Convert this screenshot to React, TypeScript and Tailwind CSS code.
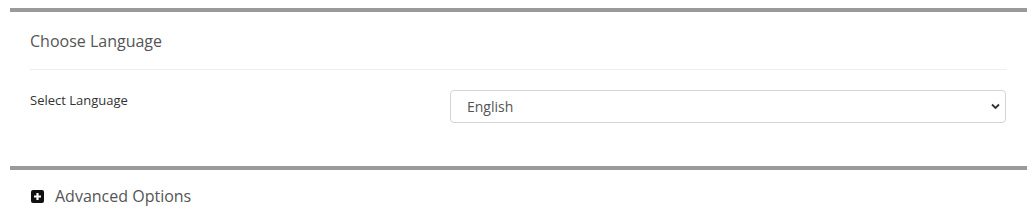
import { useState } from 'react'

export default function App() {
    const [language, setLanguage] = useState('en')
    const [advancedOpen, setAdvancedOpen] = useState(false)

    return (
        <div className="w-[1036px] h-[210px] bg-white pt-[8px] pl-[10px] pr-[9px] font-['Open_Sans',sans-serif] overflow-hidden">
            {/* language box */}
            <section className="border-t-4 border-[#9a9a9a] px-[20px]">
                <h3 className="pt-[18px] pb-[17px] text-[16px] leading-[22px] text-[#555] font-normal">Choose Language</h3>
                <div className="border-t border-[#eee] pt-[20px] pb-[43px] flex">
                    <label className="w-[420px] pt-[1px] text-[13px] leading-[18px] font-normal text-[#333]">Select Language</label>
                    <div className="relative flex-1 mr-[1px]">
                        <select
                            value={language}
                            onChange={(e) => setLanguage(e.target.value)}
                            className="appearance-none w-full h-[33px] pl-[16px] pr-[30px] border border-[#d4d4d4] rounded-[4px] bg-white text-[14px] text-[#555] outline-none"
                        >
                            <option value="en">English</option>
                            <option value="de">Deutsch</option>
                            <option value="fr">Français</option>
                        </select>
                        <svg className="absolute right-[6px] top-[13px] pointer-events-none" width="9" height="7" viewBox="0 0 9 7">
                            <path d="M1 1.5 L4.5 5 L8 1.5" fill="none" stroke="#333" strokeWidth="1.8" />
                        </svg>
                    </div>
                </div>
            </section>

            {/* advanced box */}
            <section className="border-t-4 border-[#9a9a9a] px-[20px]">
                <button
                    type="button"
                    onClick={() => setAdvancedOpen(!advancedOpen)}
                    className="flex items-center gap-[11px] pt-[15px] text-[16px] leading-[22px] text-[#555]"
                >
                    <svg width="13" height="13" viewBox="0 0 13 13" className="ml-[1px]">
                        <rect x="0" y="0" width="13" height="13" rx="2" fill="#111" />
                        <path d="M6.5 3 V10 M3 6.5 H10" stroke="#fff" strokeWidth="2.2" />
                    </svg>
                    Advanced Options
                </button>
            </section>
        </div>
    )
}
